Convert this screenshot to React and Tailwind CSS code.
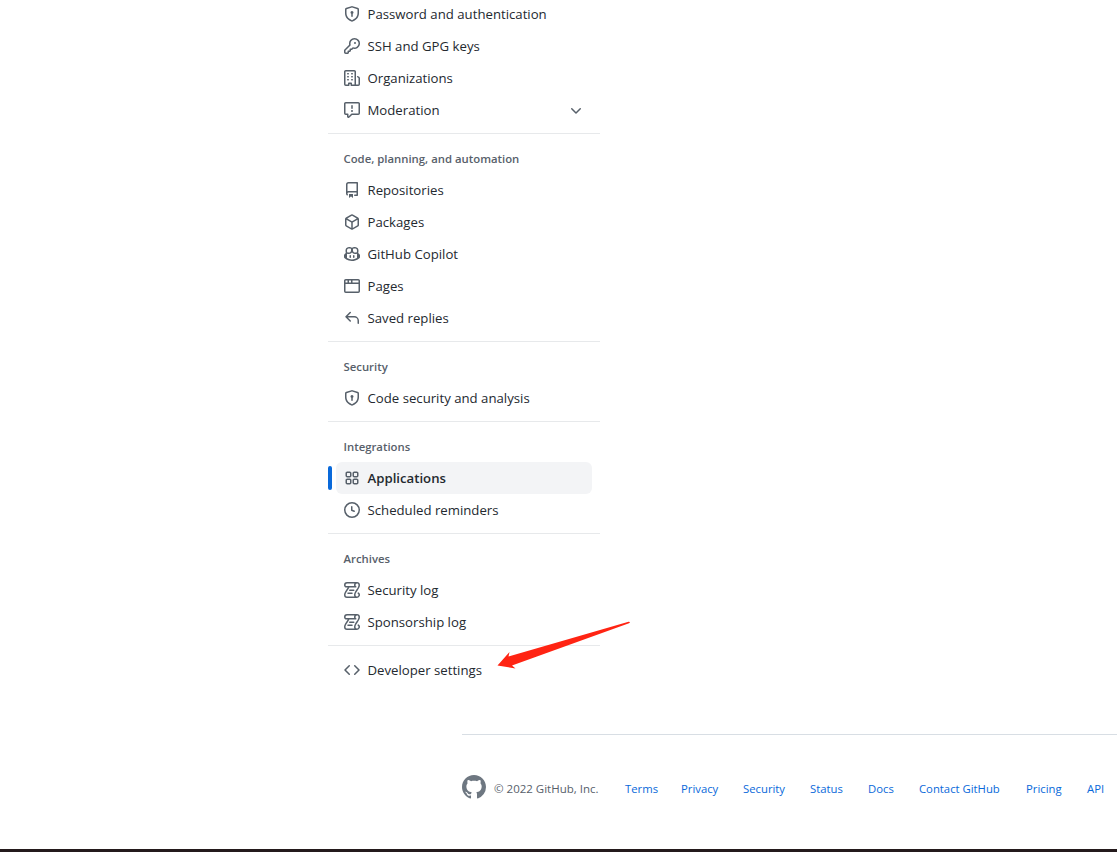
import React from "react";

const icons = {
  shield: "M8.533.133a1.75 1.75 0 00-1.066 0l-5.25 1.68A1.75 1.75 0 001 3.48V7c0 1.566.32 3.182 1.303 4.682.983 1.498 2.585 2.813 5.032 3.855a1.7 1.7 0 001.33 0c2.447-1.042 4.049-2.357 5.032-3.855C14.68 10.182 15 8.566 15 7V3.48a1.75 1.75 0 00-1.217-1.667L8.533.133zm-.61 1.429a.25.25 0 01.153 0l5.25 1.68a.25.25 0 01.174.238V7c0 1.358-.275 2.666-1.057 3.86-.784 1.194-2.121 2.34-4.366 3.297a.2.2 0 01-.154 0c-2.245-.956-3.582-2.104-4.366-3.298C2.775 9.666 2.5 8.36 2.5 7V3.48a.25.25 0 01.174-.237l5.25-1.68zM9.5 6.5a1.5 1.5 0 01-.75 1.3v2.45a.75.75 0 01-1.5 0V7.8A1.5 1.5 0 119.5 6.5z",
  key: "M6.5 5.5a4 4 0 112.731 3.795.75.75 0 00-.768.18L7.44 10.5H6.25a.75.75 0 00-.75.75v1.19l-.06.06H4.25a.75.75 0 00-.75.75v1.19l-.06.06H1.75a.25.25 0 01-.25-.25v-1.69l5.024-5.023a.75.75 0 00.181-.768A3.995 3.995 0 016.5 5.5zm4-5.5a5.5 5.5 0 00-5.348 6.788L.22 11.72a.75.75 0 00-.22.53v2C0 15.216.784 16 1.75 16h2a.75.75 0 00.53-.22l.5-.5a.75.75 0 00.22-.53V14h.75a.75.75 0 00.53-.22l.5-.5a.75.75 0 00.22-.53V12h.75a.75.75 0 00.53-.22l.932-.932A5.5 5.5 0 1010.5 0zm.5 6a1 1 0 100-2 1 1 0 000 2z",
  org: "M1.5 14.25c0 .138.112.25.25.25H4v-1.25a.75.75 0 01.75-.75h2.5a.75.75 0 01.75.75v1.25h2.25a.25.25 0 00.25-.25V1.75a.25.25 0 00-.25-.25h-8.5a.25.25 0 00-.25.25v12.5zM1.75 16A1.75 1.75 0 010 14.25V1.75C0 .784.784 0 1.75 0h8.5C11.216 0 12 .784 12 1.75v12.5c0 .085-.006.168-.018.25h2.268a.25.25 0 00.25-.25V8.285a.25.25 0 00-.111-.208l-1.055-.703a.75.75 0 11.832-1.248l1.055.703c.487.325.779.871.779 1.456v5.965A1.75 1.75 0 0114.25 16h-3.5a.75.75 0 01-.197-.026c-.099.017-.2.026-.303.026h-3a.75.75 0 01-.75-.75V14h-1v1.25a.75.75 0 01-.75.75h-3zM3 3.75A.75.75 0 013.75 3h.5a.75.75 0 010 1.5h-.5A.75.75 0 013 3.75zM3.75 6a.75.75 0 000 1.5h.5a.75.75 0 000-1.5h-.5zM3 9.75A.75.75 0 013.75 9h.5a.75.75 0 010 1.5h-.5A.75.75 0 013 9.75zM7.75 9a.75.75 0 000 1.5h.5a.75.75 0 000-1.5h-.5zM7 6.75A.75.75 0 017.75 6h.5a.75.75 0 010 1.5h-.5A.75.75 0 017 6.75zM7.75 3a.75.75 0 000 1.5h.5a.75.75 0 000-1.5h-.5z",
  report: "M1.75 1.5a.25.25 0 00-.25.25v9.5c0 .138.112.25.25.25h2a.75.75 0 01.75.75v2.19l2.72-2.72a.75.75 0 01.53-.22h6.5a.25.25 0 00.25-.25v-9.5a.25.25 0 00-.25-.25H1.75zM0 1.75C0 .784.784 0 1.75 0h12.5C15.216 0 16 .784 16 1.75v9.5A1.75 1.75 0 0114.25 13H8.06l-2.573 2.573A1.457 1.457 0 013 14.543V13H1.75A1.75 1.75 0 010 11.25v-9.5zM9 9a1 1 0 11-2 0 1 1 0 012 0zm-.25-5.25a.75.75 0 00-1.5 0v2.5a.75.75 0 001.5 0v-2.5z",
  repo: "M2 2.5A2.5 2.5 0 014.5 0h8.75a.75.75 0 01.75.75v12.5a.75.75 0 01-.75.75h-2.5a.75.75 0 110-1.5h1.75v-2h-8a1 1 0 00-.714 1.7.75.75 0 01-1.072 1.05A2.495 2.495 0 012 11.5v-9zm10.5-1V9h-8c-.356 0-.694.074-1 .208V2.5a1 1 0 011-1h8zM5 12.25v3.25a.25.25 0 00.4.2l1.45-1.087a.25.25 0 01.3 0L8.6 15.7a.25.25 0 00.4-.2v-3.25a.25.25 0 00-.25-.25h-3.5a.25.25 0 00-.25.25z",
  pkg: "M8.878.392a1.75 1.75 0 00-1.756 0l-5.25 3.045A1.75 1.75 0 001 4.951v6.098c0 .624.332 1.2.872 1.514l5.25 3.045a1.75 1.75 0 001.756 0l5.25-3.045c.54-.313.872-.89.872-1.514V4.951c0-.624-.332-1.2-.872-1.514L8.878.392zM7.875 1.69a.25.25 0 01.25 0l4.63 2.685L8 7.133 3.245 4.375l4.63-2.685zM2.5 5.677v5.372c0 .09.047.171.125.216l4.625 2.683V8.432L2.5 5.677zm6.25 8.271l4.625-2.683a.25.25 0 00.125-.216V5.677L8.75 8.432v5.516z",
  copilot: "M7.998 15.035c-4.562 0-7.873-2.914-7.998-3.749V9.338c.085-.628.677-1.686 1.588-2.065.013-.07.024-.143.036-.218.029-.183.06-.384.126-.612-.201-.508-.254-1.084-.254-1.656 0-.87.128-1.769.693-2.484.579-.733 1.494-1.124 2.724-1.261 1.206-.134 2.262.034 2.944.765.05.053.096.108.139.165.044-.057.094-.112.143-.165.682-.731 1.738-.899 2.944-.765 1.23.137 2.145.528 2.724 1.261.566.715.693 1.614.693 2.484 0 .572-.053 1.148-.254 1.656.066.228.098.429.126.612.012.076.024.148.037.218.924.385 1.522 1.471 1.591 2.095v1.872c0 .766-3.351 3.795-8.002 3.795zm0-1.485c2.28 0 4.584-1.11 5.002-1.433V7.862l-.023-.116c-.49.21-1.075.291-1.727.291-1.146 0-2.059-.327-2.71-.991A3.222 3.222 0 0 1 8 6.303a3.24 3.24 0 0 1-.544.743c-.65.664-1.563.991-2.71.991-.652 0-1.236-.081-1.727-.291l-.023.116v4.255c.419.323 2.722 1.433 5.002 1.433zM6.762 2.83c-.193-.206-.637-.413-1.682-.297-1.019.113-1.479.404-1.713.7-.247.312-.369.789-.369 1.554 0 .793.129 1.171.308 1.371.162.181.519.379 1.442.379.853 0 1.339-.235 1.638-.54.315-.322.527-.827.617-1.553.117-.935-.037-1.395-.241-1.614zm4.155-.297c-1.044-.116-1.488.091-1.681.297-.204.219-.359.679-.242 1.614.091.726.303 1.231.618 1.553.299.305.784.54 1.638.54.922 0 1.28-.198 1.442-.379.179-.2.308-.578.308-1.371 0-.765-.123-1.242-.37-1.554-.233-.296-.693-.587-1.713-.7zM6.25 9.037a.75.75 0 0 1 .75.75v1.501a.75.75 0 0 1-1.5 0V9.787a.75.75 0 0 1 .75-.75zm4.25.75v1.501a.75.75 0 0 1-1.5 0V9.787a.75.75 0 0 1 1.5 0z",
  browser: "M0 2.75C0 1.784.784 1 1.75 1h12.5c.966 0 1.75.784 1.75 1.75v10.5A1.75 1.75 0 0114.25 15H1.75A1.75 1.75 0 010 13.25V2.75zm1.75-.25a.25.25 0 00-.25.25V4.5h2v-2H1.75zM5 2.5v2h2v-2H5zm3.5 0v2h6V2.75a.25.25 0 00-.25-.25H8.5zm6 3.5h-13v7.25c0 .138.112.25.25.25h12.5a.25.25 0 00.25-.25V6z",
  reply: "M6.78 1.97a.75.75 0 010 1.06L3.81 6h6.44A4.75 4.75 0 0115 10.75v2.5a.75.75 0 01-1.5 0v-2.5a3.25 3.25 0 00-3.25-3.25H3.81l2.97 2.97a.75.75 0 11-1.06 1.06L1.47 7.28a.75.75 0 010-1.06l4.25-4.25a.75.75 0 011.06 0z",
  apps: "M1.5 3.25c0-.966.784-1.75 1.75-1.75h2.5c.966 0 1.75.784 1.75 1.75v2.5A1.75 1.75 0 015.75 7.5h-2.5A1.75 1.75 0 011.5 5.75v-2.5zM3.25 3a.25.25 0 00-.25.25v2.5c0 .138.112.25.25.25h2.5A.25.25 0 006 5.75v-2.5A.25.25 0 005.75 3h-2.5zM1.5 10.25c0-.966.784-1.75 1.75-1.75h2.5c.966 0 1.75.784 1.75 1.75v2.5a1.75 1.75 0 01-1.75 1.75h-2.5a1.75 1.75 0 01-1.75-1.75v-2.5zM3.25 10a.25.25 0 00-.25.25v2.5c0 .138.112.25.25.25h2.5a.25.25 0 00.25-.25v-2.5a.25.25 0 00-.25-.25h-2.5zM8.5 3.25c0-.966.784-1.75 1.75-1.75h2.5c.966 0 1.75.784 1.75 1.75v2.5a1.75 1.75 0 01-1.75 1.75h-2.5A1.75 1.75 0 018.5 5.75v-2.5zM10.25 3a.25.25 0 00-.25.25v2.5c0 .138.112.25.25.25h2.5a.25.25 0 00.25-.25v-2.5a.25.25 0 00-.25-.25h-2.5zM8.5 10.25c0-.966.784-1.75 1.75-1.75h2.5c.966 0 1.75.784 1.75 1.75v2.5a1.75 1.75 0 01-1.75 1.75h-2.5a1.75 1.75 0 01-1.75-1.75v-2.5zm1.75-.25a.25.25 0 00-.25.25v2.5c0 .138.112.25.25.25h2.5a.25.25 0 00.25-.25v-2.5a.25.25 0 00-.25-.25h-2.5z",
  clock: "M1.5 8a6.5 6.5 0 1113 0 6.5 6.5 0 01-13 0zM8 0a8 8 0 100 16A8 8 0 008 0zm.5 4.75a.75.75 0 00-1.5 0v3.5a.75.75 0 00.471.696l2.5 1a.75.75 0 00.557-1.392L8.5 7.742V4.75z",
  log: "M5 8.25a.75.75 0 01.75-.75h4a.75.75 0 010 1.5h-4A.75.75 0 015 8.25zM4 10.5A.75.75 0 004 12h4a.75.75 0 000-1.5H4zM13 0c1.654 0 3 1.328 3 3 0 .982-.338 1.933-.783 2.818-.443.879-1.028 1.758-1.582 2.588l-.011.017c-.568.853-1.104 1.659-1.501 2.446-.398.789-.623 1.494-.623 2.136a1.5 1.5 0 102.333-1.248.75.75 0 01.834-1.246A3 3 0 0113 16H3a3 3 0 01-3-3c0-1.582.891-3.135 1.777-4.506.209-.322.418-.637.623-.946.473-.709.923-1.386 1.287-2.048H2.51c-.576 0-1.381-.133-1.907-.783A2.68 2.68 0 010 3a3 3 0 013-3h10zm0 1.5A1.5 1.5 0 0011.500 3c0 .476.223.834.667 1.132A.75.75 0 0111.75 5.500H5.368c-.467 1.003-1.141 2.015-1.773 2.963-.192.289-.381.571-.558.845C2.13 10.711 1.5 11.916 1.5 13A1.5 1.5 0 003 14.500h7.401A2.99 2.99 0 0110 13c0-.979.338-1.928.784-2.812.441-.874 1.023-1.748 1.575-2.576l.017-.026c.568-.853 1.103-1.658 1.501-2.448.398-.79.623-1.497.623-2.143 0-.838-.669-1.495-1.500-1.495zM3 1.500A1.5 1.5 0 001.500 3c0 .321.1.569.27.778.097.12.325.227.74.227h7.674A2.737 2.737 0 0110 3c0-.546.146-1.059.401-1.500H3z",
  code: "M4.72 3.22a.75.75 0 011.06 1.06L2.06 8l3.72 3.72a.75.75 0 11-1.06 1.06L.47 8.53a.75.75 0 010-1.06l4.25-4.25zm6.56 0a.75.75 0 10-1.06 1.06L13.94 8l-3.72 3.72a.75.75 0 101.06 1.06l4.25-4.25a.75.75 0 000-1.06l-4.25-4.25z",
  chevron: "M12.78 6.22a.75.75 0 010 1.06l-4.25 4.25a.75.75 0 01-1.06 0L3.22 7.28a.75.75 0 011.06-1.06L8 9.94l3.72-3.72a.75.75 0 011.06 0z",
  mark: "M8 0C3.58 0 0 3.58 0 8c0 3.54 2.29 6.53 5.47 7.59.4.07.55-.17.55-.38 0-.19-.01-.82-.01-1.49-2.01.37-2.53-.49-2.69-.94-.09-.23-.48-.94-.82-1.13-.28-.15-.68-.52-.01-.53.63-.01 1.08.58 1.23.82.72 1.21 1.87.87 2.33.66.07-.52.28-.87.51-1.07-1.78-.2-3.64-.89-3.64-3.95 0-.87.31-1.59.82-2.15-.08-.2-.36-1.02.08-2.12 0 0 .67-.21 2.2.82.64-.18 1.32-.27 2-.27.68 0 1.36.09 2 .27 1.53-1.04 2.2-.82 2.2-.82.44 1.1.16 1.92.08 2.12.51.56.82 1.27.82 2.15 0 3.07-1.87 3.75-3.65 3.95.29.25.54.73.54 1.48 0 1.07-.01 1.93-.01 2.2 0 .21.15.46.55.38A8.013 8.013 0 0016 8c0-4.42-3.58-8-8-8z",
};

function Icon({ name, className = "size-4" }) {
  return (
    <svg viewBox="0 0 16 16" className={className} fill="currentColor" fillRule={name === "log" ? "nonzero" : "evenodd"}>
      <path d={icons[name]} fillRule="evenodd" />
    </svg>
  );
}

const groups = [
  { items: [["shield", "Password and authentication"], ["key", "SSH and GPG keys"], ["org", "Organizations"], ["report", "Moderation"]] },
  { title: "Code, planning, and automation", items: [["repo", "Repositories"], ["pkg", "Packages"], ["copilot", "GitHub Copilot"], ["browser", "Pages"], ["reply", "Saved replies"]] },
  { title: "Security", items: [["shield", "Code security and analysis"]] },
  { title: "Integrations", items: [["apps", "Applications"], ["clock", "Scheduled reminders"]] },
  { title: "Archives", items: [["log", "Security log"], ["log", "Sponsorship log"]] },
  { items: [["code", "Developer settings"]] },
];

const links = [
  ["Terms", "w-14"],
  ["Privacy", "w-[62px]"],
  ["Security", "w-[67px]"],
  ["Status", "w-[58px]"],
  ["Docs", "w-[51px]"],
  ["Contact GitHub", "w-[107px]"],
  ["Pricing", "w-[61px]"],
  ["API", "w-[30px]"],
];

function Item({ icon, label }) {
  const active = label === "Applications";
  return (
    <li className="flex h-8 items-center">
      <span className={active ? "h-6 w-1 rounded-md bg-[#0969da]" : "h-6 w-1"} />
      <a className={`ml-1 flex h-8 w-64 items-center gap-[7.5px] rounded-md px-2 text-[13.2px] whitespace-nowrap ${active ? "bg-[#f3f4f6] font-semibold" : ""}`}>
        <span className="shrink-0 text-[#57606a]"><Icon name={icon} /></span>
        <span className="grow pt-0.5">{label}</span>
        {label === "Moderation" && <span className="text-[#57606a]"><Icon name="chevron" /></span>}
      </a>
    </li>
  );
}

export default function App() {
  return (
    <div className="relative flex h-[852px] w-[1117px] flex-col overflow-hidden bg-white font-['Open_Sans',sans-serif] text-[#24292f]">
      <nav className="-mt-0.5 ml-[328px] w-[272px]">
        {groups.map((g, i) => (
          <section key={i} className={i ? "mt-[7px] border-t border-[#e7e9eb] pt-2" : ""}>
            {g.title && (
              <h3 className="flex h-8 items-center pt-0.5 pl-[15.5px] text-[11.35px] font-semibold text-[#57606a]">{g.title}</h3>
            )}
            <ul>
              {g.items.map(([icon, label]) => <Item key={label} icon={icon} label={label} />)}
            </ul>
          </section>
        ))}
      </nav>
      <svg className="absolute top-[615px] left-[490px] h-[60px] w-[150px]" viewBox="490 615 150 60">
        <path fill="#ff2413" d="M497.500 665.500 509.500 652l-1 4.500L628.500 621.800c1.500-.3 2 .8.500 1.400L512 665.500l3.500 3z" />
      </svg>
      <footer className="mt-12 ml-[462px] flex h-[115px] border-t border-[#d8dee4] pt-10 text-[11.300px] text-[#57606a]">
        <span className="text-[#6e7781]"><Icon name="mark" className="size-6" /></span>
        <span className="ml-2 flex h-7 w-[131px] shrink-0 items-center text-[11.5px]">© 2022 GitHub, Inc.</span>
        {links.map(([label, width]) => (
          <a key={label} className={`flex h-7 shrink-0 items-center whitespace-nowrap text-[#0969da] ${width}`}>{label}</a>
        ))}
      </footer>
      <div className="mt-auto h-[3px] shrink-0 bg-[#241a1c]" />
    </div>
  );
}
